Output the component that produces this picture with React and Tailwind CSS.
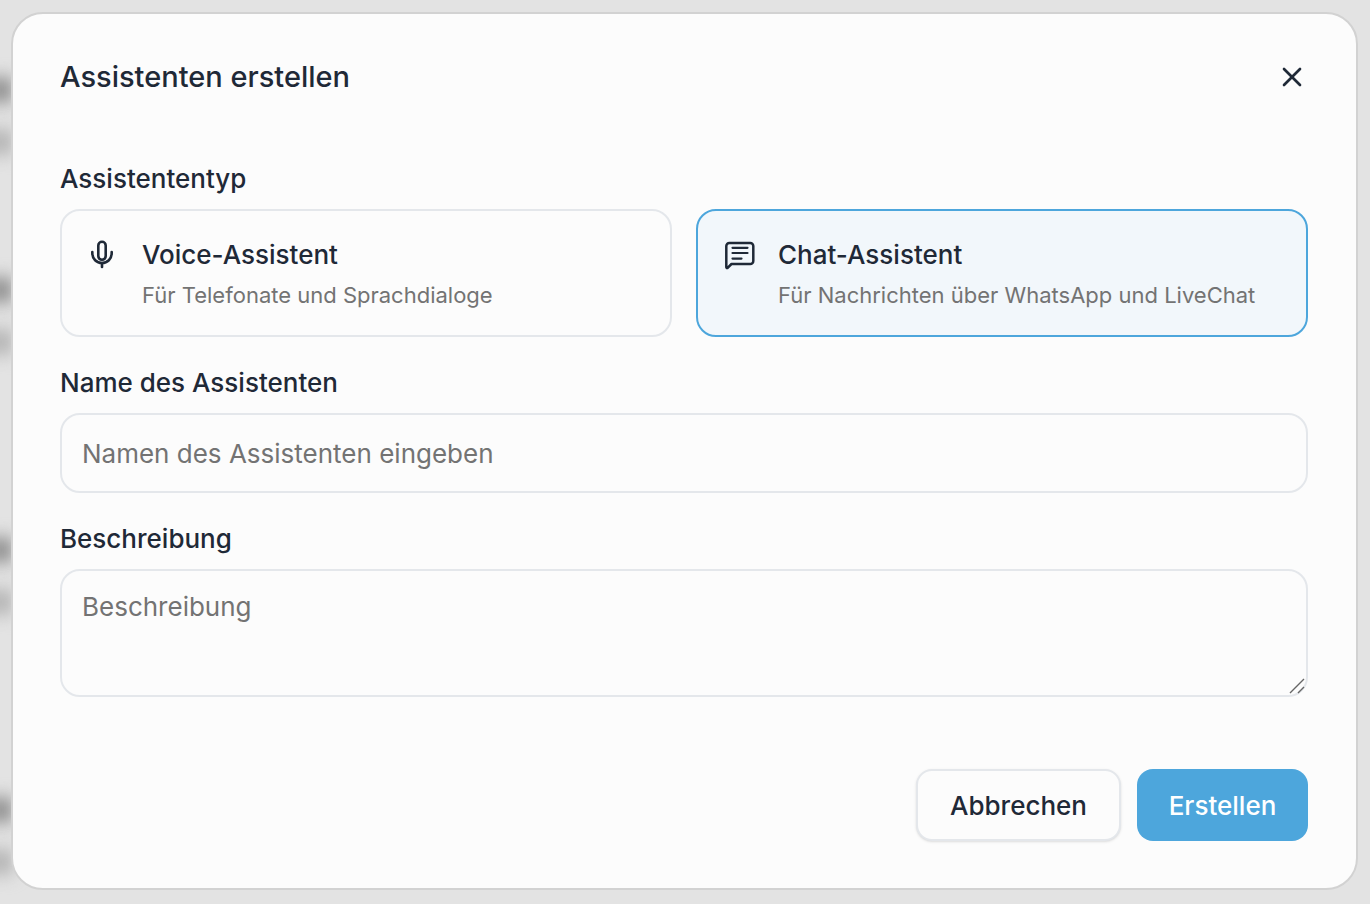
import React from "react";
import { X } from "lucide-react";

const smudges = [
  "top-[78px] bg-[#808080]",
  "top-[130px] bg-[#ababab]",
  "top-[278px] bg-[#808080]",
  "top-[330px] bg-[#ababab]",
  "top-[538px] bg-[#808080]",
  "top-[590px] bg-[#ababab]",
  "top-[798px] bg-[#808080]",
  "top-[850px] bg-[#ababab]",
];

const MicIcon = () => (
  <svg width="28" height="32" viewBox="0 0 28 32" fill="none" stroke="#1f2937" strokeWidth="2.6" strokeLinecap="round" strokeLinejoin="round">
    <rect x="10.3" y="2.8" width="7.4" height="18" rx="3.7" />
    <path d="M4.3 13v1c0 6 4.3 10 9.7 10s9.7-4 9.7-10v-1" />
    <path d="M14 24v4" />
  </svg>
);

const ChatIcon = () => (
  <svg width="32" height="32" viewBox="0 0 32 32" fill="none" stroke="#1f2937" strokeWidth="2.5" strokeLinecap="round" strokeLinejoin="round">
    <path d="M2.3 28.3V7a3 3 0 0 1 3-3h21a3 3 0 0 1 3 3v15a3 3 0 0 1-3 3H7.5l-3.9 3.9a.8.8 0 0 1-1.3-.6z" />
    <path d="M8.5 8.8h15M8.5 14h15M8.5 19.6h9" strokeWidth="2.2" />
  </svg>
);

const TypeCard = ({ icon, title, text, active }) => (
  <div
    className={`flex h-32 rounded-[20px] border-2 pl-[26px] pt-[26px] ${
      active ? "border-[#4da6dc] bg-[#f2f7fb]" : "border-[#e4e7eb]"
    }`}
  >
    <div className="mt-[2px] w-[54px] shrink-0">{icon}</div>
    <div>
      <div className="text-[26px] leading-9 font-medium text-[#1f2937]">{title}</div>
      <div className="mt-[6px] text-[22px] leading-8 text-[#737373]">{text}</div>
    </div>
  </div>
);

export default function App() {
  return (
    <div className="relative h-[904px] overflow-hidden bg-[#e3e3e3] pt-3 pl-[11px] font-['Inter',sans-serif]">
      {smudges.map((s) => (
        <div key={s} className={`absolute -left-3 h-6 w-6 blur-[9px] ${s}`} />
      ))}
      <div className="relative h-[878px] w-[1347px] rounded-[32px] border-2 border-[#d2d2d2] bg-[#fcfcfc] pl-[47px] pr-12">
        <div className="flex h-[126px] items-center justify-between">
          <h2 className="text-[29px] font-medium text-[#1f2937]">Assistenten erstellen</h2>
          <X size={32} color="#1f2937" strokeWidth={2} />
        </div>
        <label className="block h-[69px] pt-[21px] text-[26px] leading-9 font-medium text-[#1f2937]">Assistententyp</label>
        <div className="grid grid-cols-2 gap-6">
          <TypeCard icon={<MicIcon />} title="Voice-Assistent" text="Für Telefonate und Sprachdialoge" />
          <TypeCard icon={<ChatIcon />} title="Chat-Assistent" text="Für Nachrichten über WhatsApp und LiveChat" active />
        </div>
        <label className="mt-7 block text-[26px] leading-9 font-medium text-[#1f2937]">Name des Assistenten</label>
        <input
          placeholder="Namen des Assistenten eingeben"
          className="mt-3 block h-20 w-full rounded-[20px] border-2 border-[#e4e7eb] bg-transparent px-5 text-[26px] outline-none placeholder:text-[#737373]"
        />
        <label className="mt-7 block text-[26px] leading-9 font-medium text-[#1f2937]">Beschreibung</label>
        <div className="relative mt-3">
          <textarea
            placeholder="Beschreibung"
            className="block h-32 w-full resize-none rounded-[20px] border-2 border-[#e4e7eb] bg-transparent px-5 py-[18px] text-[26px] leading-9 outline-none placeholder:text-[#737373]"
          />
          <svg className="absolute right-[3px] bottom-[3px]" width="16" height="16" viewBox="0 0 16 16" fill="none" stroke="#666666" strokeWidth="1.4">
            <path d="M1 15 15 1M9 15l6-6" />
          </svg>
        </div>
        <div className="mt-[72px] flex justify-end gap-4">
          <button className="h-[72px] w-[205px] rounded-2xl border-2 border-[#e4e7eb] bg-[#fcfcfc] text-[26px] font-medium text-[#1f2937] shadow-sm">
            Abbrechen
          </button>
          <button className="h-[72px] w-[171px] rounded-2xl bg-[#4da6dc] text-[26px] font-medium text-white">
            Erstellen
          </button>
        </div>
      </div>
    </div>
  );
}
